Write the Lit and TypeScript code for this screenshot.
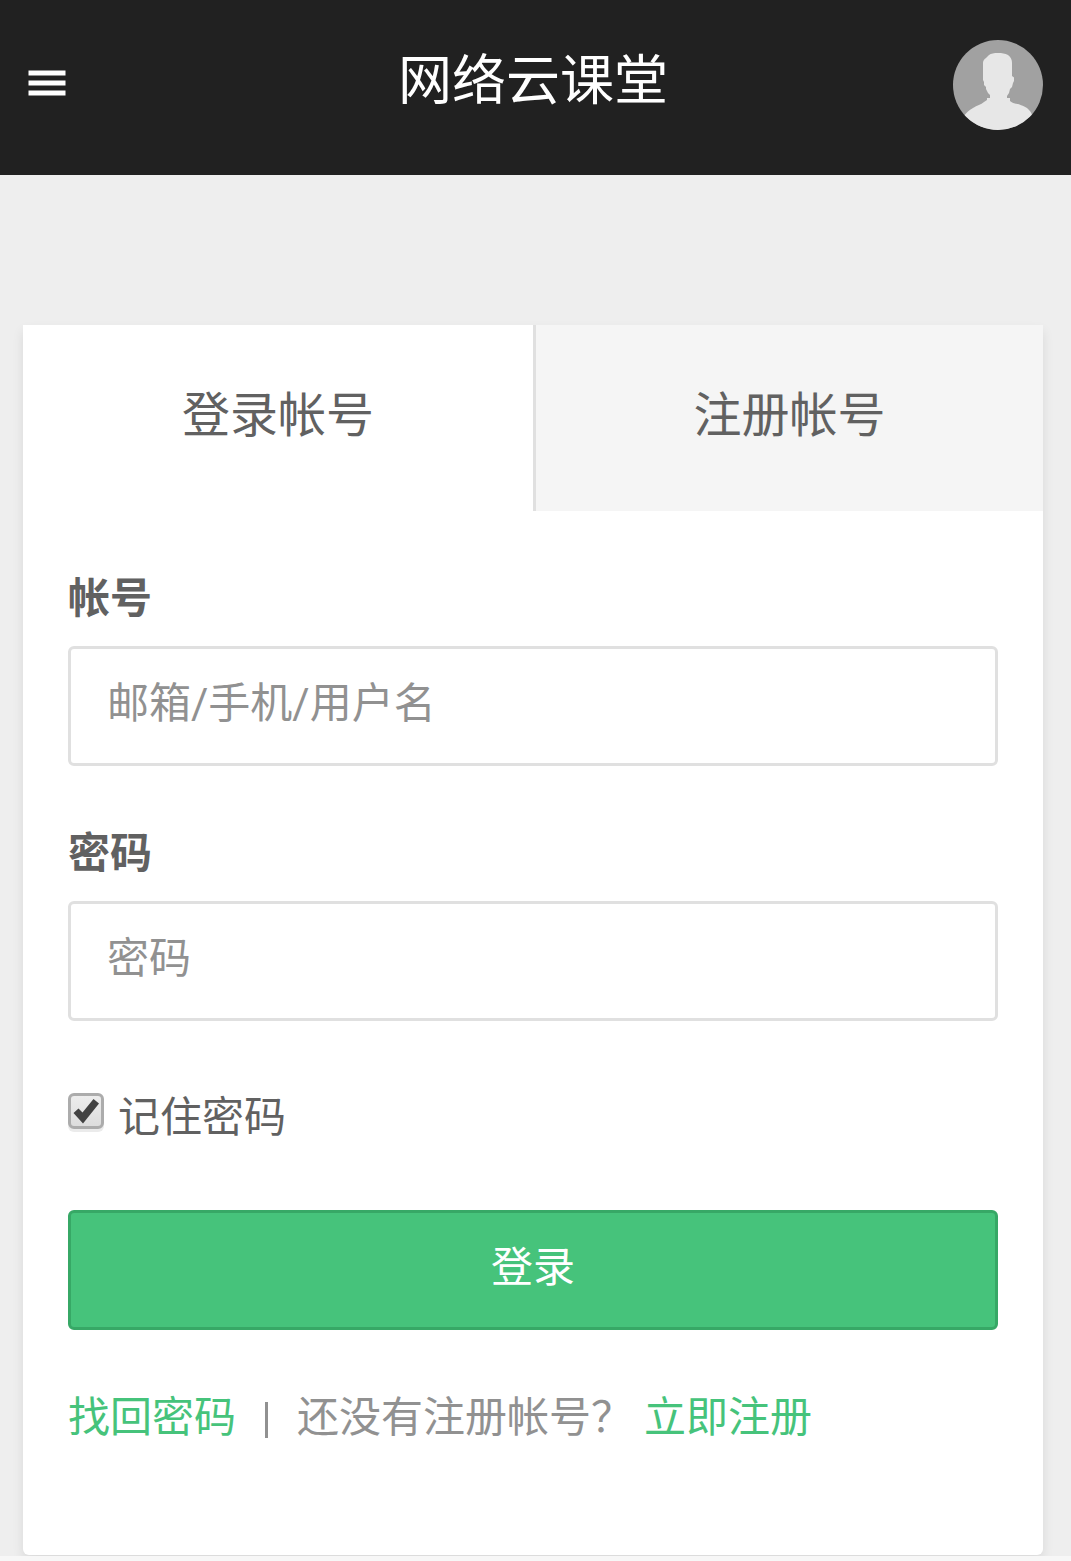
import { LitElement, html, svg, css } from 'lit';
import { customElement, property, state } from 'lit/decorators.js';

@customElement('top-bar')
class TopBar extends LitElement {
  static styles = css`
    :host {
      display: block;
    }

    .bar {
      box-sizing: border-box;
      display: flex;
      justify-content: space-between;
      align-items: flex-start;
      height: 175px;
      padding: 40px 28px 0;
      background-color: #212121;
    }

    .side {
      display: flex;
      width: 90px;
      height: 90px;
    }

    .menu {
      width: 38px;
      height: 28px;
      margin-top: 30px;
    }

    .avatar {
      width: 90px;
      height: 90px;
      border-radius: 50%;
    }

    h1 {
      margin: 0;
      padding-right: 5px;
      font-size: 54px;
      font-weight: 400;
      line-height: 74px;
      color: #fff;
    }
  `;

  @property() heading = '';

  render() {
    return html`
      <header class="bar">
        <div class="side">
          <svg class="menu" viewBox="0 0 38 28" fill="#fff">
            <rect x="0.5" y="0.5" width="37" height="5" />
            <rect x="0.5" y="10.5" width="37" height="5" />
            <rect x="0.5" y="20.5" width="37" height="5" />
          </svg>
        </div>
        <h1>${this.heading}</h1>
        <div class="side">
          <svg class="avatar" viewBox="0 0 90 90">
            <rect width="90" height="90" fill="#a1a1a1" />
            <path
              fill="#e7e7e7"
              d="M30 36V23C30 21 31 19 33 18C34 17 35 16 36 15C38 13.500 41 13 45 13C49 13 52 13.500 55 15C58 17 59 20 59 23V36L61 37.500V41L60 43L59 47L57 49L56 53L54 56V58H57V61C60 63.500 62 63.500 65 64C69 65.500 74 67 76 70C78 72 79 74 79 76V90H10V77C13 73 16 70 20 68C24 65.500 28 64.500 31 62L34 60V58H37V55L35 53L33 49V47L31 45V42L30 40Z"
            />
          </svg>
        </div>
      </header>
    `;
  }
}

@customElement('app-root')
class AppRoot extends LitElement {
  static styles = css`
    :host {
      display: block;
      box-sizing: border-box;
      height: 1561px;
      overflow: hidden;
      background-color: #eee;
      font-family: 'Noto Sans CJK SC', sans-serif;
      font-size: 42px;
      line-height: 60px;
      color: #616161;
    }

    .card {
      box-sizing: border-box;
      height: 1230px;
      margin: 150px 28px 0 23px;
      border-radius: 0 0 6px 6px;
      background-color: #fff;
      box-shadow: 0 6px 12px rgba(0, 0, 0, 0.09);
    }

    .tabs {
      display: flex;
      height: 186px;
    }

    .tab {
      box-sizing: border-box;
      flex: 1;
      padding-top: 56px;
      font-size: 48px;
      text-align: center;
      cursor: pointer;
    }

    .tab.login {
      border-right: 3px solid #e0e0e0;
      flex: 0 0 513px;
    }

    .tab.inactive {
      background-color: #f5f5f5;
    }

    form {
      display: flex;
      flex-direction: column;
      padding: 54px 45px 0;
    }

    .field {
      display: flex;
      flex-direction: column;
      gap: 21px;
      margin-bottom: 54px;
    }

    label {
      font-weight: 700;
    }

    input[type='text'],
    input[type='password'] {
      box-sizing: border-box;
      width: 100%;
      height: 120px;
      padding: 0 36px 6px;
      border: 3px solid #e0e0e0;
      border-radius: 6px;
      outline: none;
      background-color: #fff;
      font-family: Roboto, 'Noto Sans CJK SC', sans-serif;
      font-size: 42px;
      color: #616161;
    }

    input::placeholder {
      color: #919191;
      opacity: 1;
    }

    .remember {
      display: flex;
      gap: 14px;
      height: 60px;
      margin-top: 9px;
      cursor: pointer;
    }

    .check {
      width: 36px;
      height: 40px;
      margin-top: 9px;
    }

    button {
      height: 120px;
      margin-top: 66px;
      padding: 0 0 13px;
      border: 3px solid #37a866;
      border-radius: 6px;
      background-color: #46c37b;
      font-family: inherit;
      font-size: 42px;
      color: #fff;
      cursor: pointer;
    }

    .links {
      display: flex;
      margin-top: 58px;
      font-family: Roboto, 'Noto Sans CJK SC', sans-serif;
      color: #919191;
    }

    a {
      color: #46c37b;
      text-decoration: none;
    }

    .divider {
      width: 3px;
      height: 36px;
      margin: 14px 29px 0;
      background-color: #919191;
    }

    .signup {
      margin-left: 11px;
    }

    .footer-strip {
      height: 5px;
      margin-top: 1px;
      background-color: #f7f7f7;
    }
  `;

  @state() private tab = 'login';
  @state() private remember = true;

  render() {
    return html`
      <top-bar heading="网络云课堂"></top-bar>
      <main class="card">
        <nav class="tabs">
          <div
            class="tab login ${this.tab === 'login' ? '' : 'inactive'}"
            @click=${() => (this.tab = 'login')}
          >登录帐号</div>
          <div
            class="tab ${this.tab === 'register' ? '' : 'inactive'}"
            @click=${() => (this.tab = 'register')}
          >注册帐号</div>
        </nav>
        <form @submit=${this._handleLogin}>
          <div class="field">
            <label for="username">帐号</label>
            <input type="text" id="username" placeholder="邮箱/手机/用户名" />
          </div>
          <div class="field">
            <label for="password">密码</label>
            <input type="password" id="password" placeholder="密码" />
          </div>
          <div class="remember" @click=${() => (this.remember = !this.remember)}>
            <svg class="check" viewBox="0 0 36 40">
              <defs>
                <linearGradient id="face" x1="0" y1="0" x2="0" y2="1">
                  <stop offset="0" stop-color="#eeeeee" />
                  <stop offset="1" stop-color="#dcdcdc" />
                </linearGradient>
              </defs>
              <rect y="3" width="36" height="36" rx="6" fill="#ebebeb" />
              <rect x="1.5" y="1.5" width="33" height="33" rx="4.5" fill="url(#face)" stroke="#acacac" stroke-width="3" />
              ${this.remember
                ? svg`<path fill="#424242" d="M5.500 20L10.500 15.500L14.500 19.500L25.500 6L31 10.500L15 30.500Z" />`
                : ''}
            </svg>
            <span>记住密码</span>
          </div>
          <button type="submit">登录</button>
          <div class="links">
            <a href="#">找回密码</a>
            <span class="divider"></span>
            <span>还没有注册帐号？</span>
            <a class="signup" href="#">立即注册</a>
          </div>
        </form>
      </main>
      <div class="footer-strip"></div>
    `;
  }

  _handleLogin(e: Event) {
    e.preventDefault();
  }
}
